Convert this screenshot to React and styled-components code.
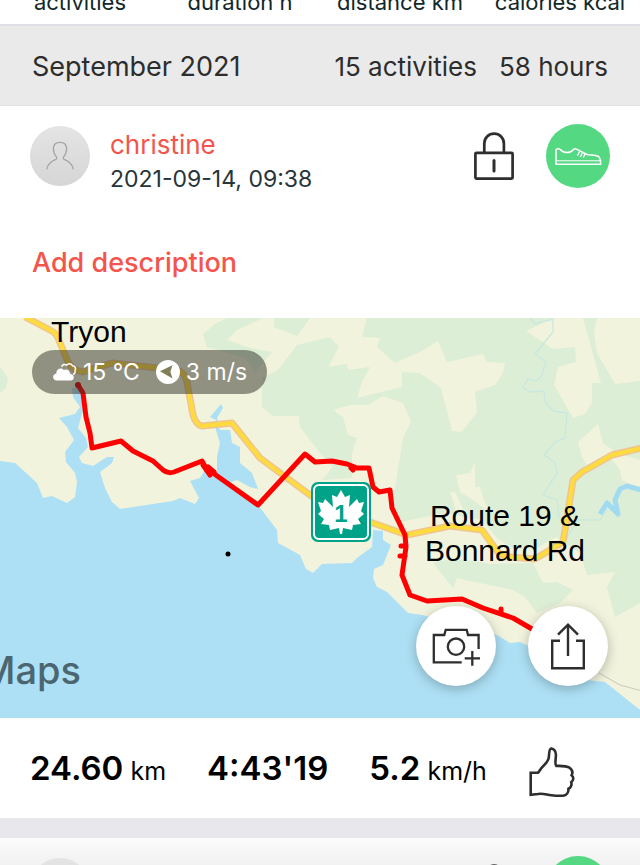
import React from 'react';
import styled, { createGlobalStyle } from 'styled-components';

const GlobalStyle = createGlobalStyle`
  * {
    box-sizing: border-box;
  }

  body {
    margin: 0;
    background-color: #fff;
    color: #2d2d2d;
    font-family: Inter, 'Liberation Sans', sans-serif;
  }
`;

const Page = styled.div`
  height: 100vh;
  overflow: hidden;
`;

const Totals = styled.div`
  display: grid;
  grid-template-columns: repeat(4, 1fr);
  align-content: end;
  height: 26px;
  padding-bottom: 8px;
  overflow: hidden;
  border-bottom: 2px solid #dfdfe6;
`;

const TotalLabel = styled.span`
  color: #10282b;
  font-size: 22px;
  line-height: 28px;
  text-align: center;
  white-space: nowrap;
`;

const MonthBar = styled.header`
  display: flex;
  align-items: center;
  gap: 22px;
  height: 80px;
  padding: 2px 32px 0;
  background-color: #eaeaea;
  border-bottom: 1px solid #dfdfe6;
  font-size: 26px;
  line-height: 32px;
  white-space: nowrap;
`;

const Month = styled.h2`
  flex: 1;
  margin: 0;
  font-size: 27px;
  font-weight: 400;
`;

const Card = styled.article`
  background: ${({ $faded }) => ($faded ? 'linear-gradient(#fcfcfc, #f1f1f1 28px)' : '#fff')};
  border-bottom: 20px solid #e8e8ec;
`;

const CardHeader = styled.div`
  display: flex;
  align-items: flex-start;
  padding: 18px 30px 0;
`;

const Avatar = styled.div`
  width: 60px;
  height: 60px;
  margin-top: 2px;
  border-radius: 50%;
  background: linear-gradient(#e4e4e4, #d6d6d6);
`;

const Author = styled.div`
  flex: 1;
  padding: 4px 20px 0;
`;

const AuthorLink = styled.a`
  display: block;
  color: #f4544c;
  font-size: 26px;
  line-height: 34px;
  text-decoration: none;
`;

const DateText = styled.time`
  display: block;
  color: #27343a;
  font-size: 23px;
  line-height: 34px;
  white-space: nowrap;
`;

const PlainButton = styled.button`
  display: block;
  padding: 0;
  border: 0;
  background: none;
  color: #2e2e2e;
  cursor: pointer;
`;

const LockButton = styled(PlainButton)`
  margin: 8px 32px 0 0;
`;

const Sport = styled.div`
  width: 64px;
  height: 64px;
  border-radius: 50%;
  background-color: #55d882;
`;

const DescriptionButton = styled(PlainButton)`
  margin: 49px 32px 37px;
  color: #f4544c;
  font-family: inherit;
  font-size: 27px;
  font-weight: 500;
  line-height: 36px;
`;

const MapPanel = styled.div`
  position: relative;
  height: 400px;
  overflow: hidden;
  background-color: #ade0f5;
`;

const MapSvg = styled.svg`
  display: block;
  width: 100%;
  height: 100%;
  font-family: 'Liberation Sans', Arial, sans-serif;
`;

const Weather = styled.div`
  position: absolute;
  top: 32px;
  left: 32px;
  display: flex;
  align-items: center;
  gap: 6px;
  height: 44px;
  padding: 0 20px;
  border-radius: 22px;
  background-color: rgba(48, 48, 38, 0.5);
  color: #fff;
  font-size: 23px;
  white-space: nowrap;
`;

const Temperature = styled.span`
  margin-right: 10px;
`;

const MapActions = styled.div`
  position: absolute;
  right: 32px;
  bottom: 32px;
  display: flex;
  gap: 32px;
`;

const RoundButton = styled(PlainButton)`
  width: 80px;
  height: 80px;
  border-radius: 50%;
  background-color: #fff;
  box-shadow: 0 3px 12px rgba(0, 0, 0, 0.25);
`;

const Stats = styled.div`
  display: flex;
  align-items: center;
  gap: 41px;
  height: 100px;
  padding: 10px 30px 0;
  color: #000;
  white-space: nowrap;
`;

const Stat = styled.span`
  padding-bottom: 10px;
  font-size: 25px;
`;

const StatValue = styled.strong`
  font-size: 33px;
  font-weight: 600;
`;

const AvatarIcon = () => (
  <svg width="60" height="60" viewBox="0 0 60 60" fill="none" stroke="#a5a5a5" strokeWidth="1.3">
    <path d="M16.7 43.5C17.5 36.5 23.5 34.5 26 33.3C27.2 32.6 26.8 31.5 26.2 30.6C24.2 28.4 23.4 25.6 23.4 22.6C23.4 18.6 26 16.3 30 16.3S36.6 18.6 36.6 22.6C36.6 25.6 35.8 28.4 33.8 30.6C33.2 31.5 32.8 32.6 34 33.3C36.5 34.5 42.5 36.5 43.3 43.5" />
  </svg>
);

const LockIcon = () => (
  <svg width="40" height="48" viewBox="0 0 40 48" fill="none" stroke="currentColor" strokeWidth="2.7">
    <rect x="1.4" y="20.8" width="37.2" height="25.8" rx="1" />
    <path d="M10.3 20.5V11.5a9.8 9.8 0 0 1 19.6 0v9" />
    <path d="M20 28.5v10.5" strokeLinecap="round" strokeWidth="3" />
  </svg>
);

const ShoeIcon = () => (
  <svg width="64" height="64" viewBox="0 0 64 64" fill="none" stroke="#fff" strokeWidth="1.6" strokeLinejoin="round">
    <path d="M10 40.3V26.3C10 24.6 13 24.3 14.3 25.5C17.8 29.6 24.2 29.6 27.5 25.4C28.8 24.3 29.8 24.7 31 25.4L40.5 30.2C43.6 31.5 49 30.4 52 32.2C54.4 33.8 54.7 36.5 54.7 40.3Z" />
    <path d="M10 36.8H54.5" strokeWidth="1" />
    <path d="M34 26.8L31.3 32M36.7 28L34.3 33M39.2 29.3L37.3 33.8" strokeWidth="1.3" />
  </svg>
);

const CloudIcon = () => (
  <svg width="25" height="20" viewBox="0 0 25 20" fill="#fff">
    <path d="M9.5 4.8C10.5 2.3 13 1.8 14.7 3.1C16.2 1.1 19.5 1.2 20.5 3.7C23 3.7 24.5 6.4 22.9 8.6C23.6 10.5 22.5 12 21 12.3" fill="none" stroke="#fff" strokeWidth="1.5" />
    <path d="M5 18.5C.2 18.5-.3 12.3 4.4 11.6C3.8 7 9.1 5.1 11.6 8C14.9 6.4 18.2 8.4 18 11.8C23 12.2 22.8 18.5 18.5 18.5Z" />
  </svg>
);

const WindIcon = () => (
  <svg width="24" height="24" viewBox="0 0 24 24">
    <circle cx="12" cy="12" r="12" fill="#fff" />
    <path d="M4 11.3L16.5 5.2L14.4 11.8L16.5 18.5Z" fill="#817f58" />
  </svg>
);

const CameraIcon = () => (
  <svg width="80" height="80" viewBox="0 0 80 80" fill="none" stroke="currentColor" strokeWidth="2.3">
    <path d="M45.7 56.3H17.8V29H28.3L29.7 23.8H50.7L52 29H62.6V43" />
    <circle cx="40" cy="40.7" r="8.2" />
    <path d="M56.3 45V59.7M48.7 52.4H64" />
  </svg>
);

const ShareIcon = () => (
  <svg width="80" height="80" viewBox="0 0 80 80" fill="none" stroke="currentColor" strokeWidth="2.4">
    <path d="M32 34.8H24.2V62.3H55.8V34.8H48M40 50V18.8M30 28.6L40 18.6L50 28.6" />
  </svg>
);

const ThumbIcon = () => (
  <svg width="48" height="54" viewBox="0 0 48 54" fill="none" stroke="currentColor" strokeWidth="2.6">
    <path d="M2.7 27.8V49.7L10 49C15 48 19 50 23.3 50.3C28 50.8 31.5 51 35 50.7C38.6 50.3 40.7 47.4 40.4 43.8C43 42.8 44.1 39.4 43.2 37.2C45.8 35.2 46 32.3 43.6 30.3C45 27.6 44.3 24.7 41.5 22.7C38.4 20.6 33.4 20.9 28.3 20.9C26.3 18.7 28.2 13.5 27.9 9.3C27.7 6.4 25.8 3.9 23.3 3.5C20.2 3.9 21.7 10.7 20.4 14C19.6 16.8 17.6 18.8 15.3 21C12.7 23.2 12 25.8 9.9 27.8Z" />
  </svg>
);

const MAIN_ROAD =
  'M25 -1L50 12Q56 15 58 20L68 44Q73 53 83 54L112 45L157 50L176 52Q185 54 187 64L193 97Q196 107 202 108L232 105L260 140L310 177L345 198L373 205L407 217L450 208L482 212L497 233Q502 239 510 239L535 241L563 224L567 200L573 162L582 154L612 137L642 130';

const RIDE =
  'M78 67L83 75L86 99L90 115L92 130L121 123L133 133L153 143L163 152Q168 156 174 154L202 143L207 152L213 155L258 187L305 136L315 144L332 143L347 146L357 150L369 150L373 169L379 174L390 172L392 190L405 217L406 229L402 257L410 277L427 283L462 281L483 290L513 300L532 311L568 328';

const RouteMap = () => (
  <MapSvg viewBox="0 0 640 400" preserveAspectRatio="xMidYMid slice" role="img" aria-label="Activity route">
    <rect width="640" height="400" fill="#f1f3dc" />
    {/* woodland */}
    <g fill="#dceed6">
      <path d="M0 49L8 60L6 70L0 75ZM227 0H263L237 12L227 22L250 30L272 34L255 54L245 40L207 29L203 16L215 6ZM274 0H310L297 18L274 9Z" />
      <path d="M367 0L362 19L380 20L377 29L395 45L402 54V69L357 80L362 64L370 49L348 52L347 46L328 49L339 29L330 19L297 27L278 52L262 60V89L273 98H299L300 109L320 135L333 149L322 162L352 160L352 135L357 120L348 117L343 99L333 92L350 87H368L383 78L403 85L411 104L403 120L400 139L396 165L390 195L400 204L420 200L445 195L482 202L497 220L512 230L535 231L556 219L580 235L587 257L615 254L607 269L615 299L640 285V0Z" />
      <path d="M433 245L455 240L490 246L533 245L543 265L557 264L573 272L560 285L537 295L525 279L513 272L470 263L457 260L453 270Z" />
    </g>
    {/* fields */}
    <g fill="#f1f3dc">
      <path d="M395 45L420 34L438 23L447 44L483 36L487 44L505 45L503 55L495 67L475 74L477 94L462 114L452 113L441 70L420 55L402 54Z" />
      <path d="M553 0L526 13L553 31L575 29L576 44L558 49L554 67L573 100L585 96L592 85V65H601L583 0ZM597 0L594 15L597 35L615 66L640 63V0Z" />
      <path d="M598 106L578 124L582 139L587 147L610 139L620 152L622 162L640 172V142L617 135L603 125ZM475 144L470 155L456 157L460 174L473 182L491 196L484 182L480 169H475ZM450 174L456 192L467 199L455 174Z" />
    </g>
    {/* sea and inlets */}
    <path
      fill="#ade0f5"
      d="M0 143L15 145L25 154L37 165L43 180L52 178L67 185L75 179L77 164L75 155L66 144L65 134L74 122L67 109L59 100L75 96L80 89L73 79L72 70H80L83 92L78 110L86 120L88 129L79 139L82 145L93 148L107 139H114L112 145L100 154L105 170L112 184L120 191L173 183L180 180L195 186L199 180L190 163L200 160L205 152L217 154L217 139L220 125L215 109L216 102L210 99L221 86L223 90L217 100L220 112H230L232 125L240 129V145L252 155L258 171L250 169L237 162L228 165L258 187L277 212L278 225L300 237L306 251L313 255L322 246L352 245L357 240L372 229L373 212L383 213V222L391 227L383 247L374 251L373 260L377 269L387 274L408 295L422 297L497 317L510 325L520 324L533 330L587 362L605 364L640 392V400H0Z"
    />
    <path d="M530 0L535 6L553 1V14L535 36L546 44L542 57L537 63L528 61L523 69L530 74L544 73L545 84L553 93L567 95L565 120L555 124L544 137L555 145L557 155L543 177L557 182L559 200" fill="none" stroke="#c9e8e0" strokeWidth="1.3" />
    <path d="M600 196L607 185L618 196L615 182L620 171L627 168L641 172" fill="none" stroke="#a2daf1" strokeWidth="5" strokeLinejoin="round" />
    <path d="M565 224L577 202L600 202L607 191" fill="none" stroke="#c3e5de" />
    <path d="M599 355L620 367L642 373" fill="none" stroke="#c9c9be" />
    {/* roads */}
    <g fill="none" strokeLinejoin="round">
      <path d={MAIN_ROAD} stroke="#f0c490" strokeWidth="7" />
      <path d={MAIN_ROAD} stroke="#ffdc3d" strokeWidth="4" />
    </g>
    {/* recorded track */}
    <g fill="none" stroke="#f00" strokeLinejoin="round" strokeLinecap="round" strokeWidth="5">
      <path d={RIDE} />
      <path d="M203 147L210 157M208 149L214 154M401 228H405M400 238H405M501 291V295M351 150L353 152" />
    </g>
    <circle cx="78" cy="67" r="3" fill="#e00000" />
    {/* highway shield */}
    <rect x="311" y="164" width="60" height="60" rx="7" fill="#00a388" />
    <rect x="314" y="167" width="54" height="54" rx="5" fill="none" stroke="#fff" strokeWidth="2" />
    <path fill="#fff" d="M341 172L345 179L350 177L349 189L357 181L359 185L364 184L361 193L364 196L358 201L361 206L353 207L352 212L343 210L342 216H340L339 210L330 212L329 207L321 206L324 201L318 196L321 193L318 184L323 185L325 181L333 189L332 177L337 179Z" />
    <text x="341" y="204" fill="#00a388" fontSize="24" fontWeight="700" textAnchor="middle">1</text>
    <circle cx="228" cy="236" r="2.5" />
    <g fontSize="30">
      <text x="51" y="24">Tryon</text>
      <text x="505" y="208" textAnchor="middle">Route 19 &amp;</text>
      <text x="505" y="243" textAnchor="middle">Bonnard Rd</text>
    </g>
    <text x="81" y="366" fill="#4b6670" fontFamily="Inter" fontSize="38" fontWeight="500" textAnchor="end">Maps</text>
  </MapSvg>
);

const ActivityHeader = ({ name, date }) => (
  <CardHeader>
    <Avatar>
      <AvatarIcon />
    </Avatar>
    <Author>
      <AuthorLink href="#profile">{name}</AuthorLink>
      <DateText>{date}</DateText>
    </Author>
    <LockButton type="button" aria-label="Privacy">
      <LockIcon />
    </LockButton>
    <Sport>
      <ShoeIcon />
    </Sport>
  </CardHeader>
);

const totals = ['activities', 'duration h', 'distance km', 'calories kcal'];

const App = () => {
  return (
    <Page>
      <GlobalStyle />
      <Totals>
        {totals.map(label => <TotalLabel key={label}>{label}</TotalLabel>)}
      </Totals>
      <MonthBar>
        <Month>September 2021</Month>
        <span>15 activities</span>
        <span>58 hours</span>
      </MonthBar>
      <Card>
        <ActivityHeader name="christine" date="2021-09-14, 09:38" />
        <DescriptionButton type="button">Add description</DescriptionButton>
        <MapPanel>
          <RouteMap />
          <Weather>
            <CloudIcon />
            <Temperature>15 °C</Temperature>
            <WindIcon />
            <span>3 m/s</span>
          </Weather>
          <MapActions>
            <RoundButton type="button" aria-label="Add photo">
              <CameraIcon />
            </RoundButton>
            <RoundButton type="button" aria-label="Share">
              <ShareIcon />
            </RoundButton>
          </MapActions>
        </MapPanel>
        <Stats>
          <Stat><StatValue>24.60</StatValue> km</Stat>
          <Stat><StatValue>4:43'19</StatValue></Stat>
          <Stat><StatValue>5.2</StatValue> km/h</Stat>
          <PlainButton type="button" aria-label="Like">
            <ThumbIcon />
          </PlainButton>
        </Stats>
      </Card>
      <Card $faded>
        <ActivityHeader />
      </Card>
    </Page>
  );
};

export default App;
